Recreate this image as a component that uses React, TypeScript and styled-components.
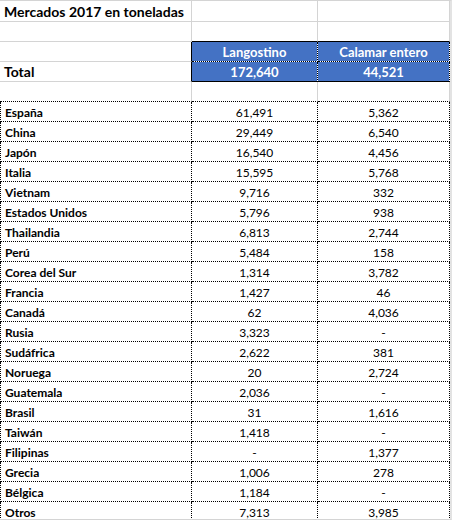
import React from 'react';
import styled, { createGlobalStyle } from 'styled-components';

const GlobalStyle = createGlobalStyle`
  html, body {
    margin: 0;
    padding: 0;
    background: #ffffff;
  }
`;

type Market = { country: string; shrimp: string; squid: string };

const markets: Market[] = [
  { country: 'España', shrimp: '61,491', squid: '5,362' },
  { country: 'China', shrimp: '29,449', squid: '6,540' },
  { country: 'Japón', shrimp: '16,540', squid: '4,456' },
  { country: 'Italia', shrimp: '15,595', squid: '5,768' },
  { country: 'Vietnam', shrimp: '9,716', squid: '332' },
  { country: 'Estados Unidos', shrimp: '5,796', squid: '938' },
  { country: 'Thailandia', shrimp: '6,813', squid: '2,744' },
  { country: 'Perú', shrimp: '5,484', squid: '158' },
  { country: 'Corea del Sur', shrimp: '1,314', squid: '3,782' },
  { country: 'Francia', shrimp: '1,427', squid: '46' },
  { country: 'Canadá', shrimp: '62', squid: '4,036' },
  { country: 'Rusia', shrimp: '3,323', squid: '-' },
  { country: 'Sudáfrica', shrimp: '2,622', squid: '381' },
  { country: 'Noruega', shrimp: '20', squid: '2,724' },
  { country: 'Guatemala', shrimp: '2,036', squid: '-' },
  { country: 'Brasil', shrimp: '31', squid: '1,616' },
  { country: 'Taiwán', shrimp: '1,418', squid: '-' },
  { country: 'Filipinas', shrimp: '-', squid: '1,377' },
  { country: 'Grecia', shrimp: '1,006', squid: '278' },
  { country: 'Bélgica', shrimp: '1,184', squid: '-' },
  { country: 'Otros', shrimp: '7,313', squid: '3,985' },
];

const GRID = '1px solid #d4d4d4';
const DOT = '1px dotted #000000';
const SOLID = '1px solid #000000';

const Sheet = styled.div`
  box-sizing: border-box;
  width: 452px;
  height: 520px;
  overflow: hidden;
  background: #ffffff;
  border-top: 1px solid #d4d4d4;
  border-right: 2px solid #e3e3e3;
  border-bottom: 1px solid #d4d4d4;
  font-family: Lato, 'Liberation Sans', sans-serif;
  color: #000000;
`;

const Row = styled.div<{ $h?: number }>`
  display: grid;
  grid-template-columns: 192px 126px 132px;
  height: ${p => p.$h ?? 20}px;
`;

const Cell = styled.div<{
  $r?: string;
  $b?: string;
  $l?: string;
  $fill?: boolean;
  $center?: boolean;
  $bold?: boolean;
  $size?: number;
}>`
  box-sizing: border-box;
  display: flex;
  align-items: flex-end;
  justify-content: ${p => (p.$center ? 'center' : 'flex-start')};
  padding: 0 0 1px ${p => (p.$center ? 0 : 4)}px;
  border-right: ${p => p.$r ?? 'none'};
  border-bottom: ${p => p.$b ?? 'none'};
  border-left: ${p => p.$l ?? 'none'};
  background: ${p => (p.$fill ? '#4472c4' : '#ffffff')};
  background-clip: padding-box;
  color: ${p => (p.$fill ? '#ffffff' : '#000000')};
  font-size: ${p => p.$size ?? 12}px;
  font-weight: ${p => (p.$bold ? 700 : 400)};
  white-space: nowrap;
  overflow: hidden;
`;

export default function App() {
  return (
    <>
      <GlobalStyle />
      <Sheet>
        <Row $h={21}>
          <Cell $r={GRID} $b={GRID} $bold $size={14}>Mercados 2017 en toneladas</Cell>
          <Cell $r={GRID} $b={GRID} />
          <Cell $r={GRID} $b={GRID} />
        </Row>
        <Row>
          <Cell $r={GRID} $b={GRID} />
          <Cell $r={GRID} $b={SOLID} />
          <Cell $r={GRID} $b={SOLID} />
        </Row>
        <Row>
          <Cell $r={SOLID} $b={GRID} />
          <Cell $r={DOT} $b={DOT} $fill $center $bold $size={13}>Langostino</Cell>
          <Cell $r={DOT} $b={DOT} $fill $center $bold $size={13}>Calamar entero</Cell>
        </Row>
        <Row>
          <Cell $r={SOLID} $b={GRID} $bold $size={14}>Total</Cell>
          <Cell $r={DOT} $b={SOLID} $fill $center $bold $size={13}>172,640</Cell>
          <Cell $r={DOT} $b={SOLID} $fill $center $bold $size={13}>44,521</Cell>
        </Row>
        <Row>
          <Cell $r={GRID} $b={DOT} />
          <Cell $r={GRID} $b={DOT} />
          <Cell $r={GRID} $b={DOT} />
        </Row>
        {markets.map(m => (
          <Row key={m.country}>
            <Cell $l={DOT} $r={DOT} $b={DOT} $bold>{m.country}</Cell>
            <Cell $r={DOT} $b={DOT} $center>{m.shrimp}</Cell>
            <Cell $r={DOT} $b={DOT} $center>{m.squid}</Cell>
          </Row>
        ))}
      </Sheet>
    </>
  );
}
